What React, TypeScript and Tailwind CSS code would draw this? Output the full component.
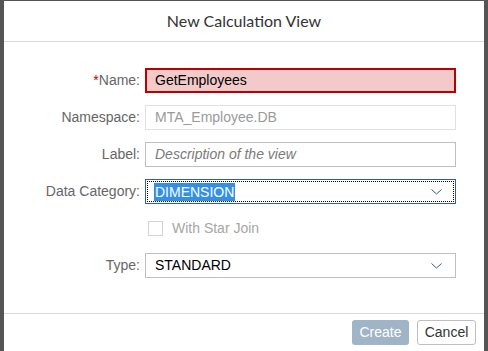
import React from "react";

const font = { fontFamily: '"Liberation Sans", Arial, sans-serif' };

function Chevron() {
  return (
    <svg width="11" height="6" viewBox="0 0 11 6" className="shrink-0">
      <path d="M0.5 0.5 L5.5 5 L10.5 0.5" fill="none" stroke="#346187" strokeWidth="1" />
    </svg>
  );
}

function Row({ label, required, children }: { label: string; required?: boolean; children: React.ReactNode }) {
  return (
    <div className="flex items-center h-[25px]">
      <div className="w-[136px] text-right text-[14px] text-[#666]">
        {required && <span className="text-[#bb0000]">*</span>}
        {label}
      </div>
      <div className="ml-[5px] w-[311px]">{children}</div>
    </div>
  );
}

export default function App() {
  return (
    <div className="w-[488px] h-[351px] bg-[#555] pl-[4px] pr-[4px] pt-[1px] overflow-hidden" style={font}>
      <div className="w-[480px] h-[350px] bg-white flex flex-col">
        <div className="h-[41px] flex items-center justify-center border-b border-[#d9d9d9]">
          <span className="text-[16px] text-[#333]" style={{ fontFamily: "Lato, sans-serif" }}>
            New Calculation View
          </span>
        </div>

        <div className="flex flex-col gap-[12px] pt-[26px] flex-1">
          <Row label="Name:" required>
            <div className="h-[25px] border-2 border-[#bb0000] bg-[#f2caca] flex items-center px-[8px] text-[14px] text-[#000]">
              GetEmployees
            </div>
          </Row>
          <Row label="Namespace:">
            <div className="h-[25px] border border-[#e0e0e0] flex items-center px-[9px] text-[14px] text-[#9a9a9a]">
              MTA_Employee.DB
            </div>
          </Row>
          <Row label="Label:">
            <div className="h-[25px] border border-[#bfbfbf] flex items-center px-[9px] text-[14px] italic text-[#7a7a7a]">
              Description of the view
            </div>
          </Row>
          <Row label="Data Category:">
            <div className="h-[25px] border border-[#346187] p-[1px]">
              <div className="h-full border border-dotted border-black flex items-center justify-between pl-[6px] pr-[11px]">
                <span className="bg-[#3390e8] text-white text-[14px] leading-[18px] px-[1px]">DIMENSION</span>
                <Chevron />
              </div>
            </div>
          </Row>
          <div className="flex items-center h-[25px]">
            <div className="ml-[144px] w-[15px] h-[15px] border border-[#d4d4d4] bg-white" />
            <span className="ml-[9px] text-[14px] text-[#a6a6a6]">With Star Join</span>
          </div>
          <Row label="Type:">
            <div className="h-[25px] border border-[#bfbfbf] flex items-center justify-between pl-[9px] pr-[13px] text-[14px] text-[#000]">
              STANDARD
              <Chevron />
            </div>
          </Row>
        </div>

        <div className="h-[38px] border-t border-[#d9d9d9] flex items-start justify-end gap-[8px] pr-[8px] pt-[6px]">
          <div className="h-[25px] w-[57px] rounded-[3px] bg-[#9fb4c6] text-white text-[14px] flex items-center justify-center">
            Create
          </div>
          <div className="h-[25px] w-[59px] rounded-[3px] border border-[#bfbfbf] bg-white text-[#333] text-[14px] flex items-center justify-center">
            Cancel
          </div>
        </div>
      </div>
    </div>
  );
}
